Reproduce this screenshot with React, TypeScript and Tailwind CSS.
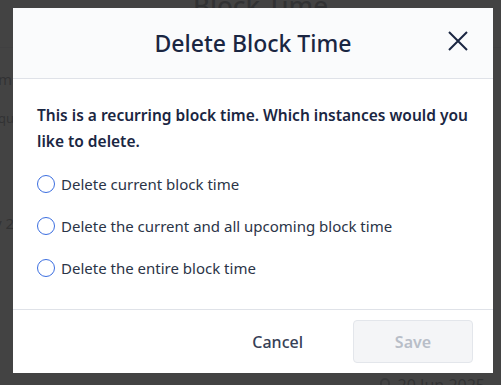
import { useState } from "react";

// 반복 블록 시간 삭제 모달 (정적 데모)

const FONT = { fontFamily: '"Noto Sans", "Open Sans", sans-serif' };

const options = [
  { key: "current", label: "Delete current block time" },
  { key: "upcoming", label: "Delete the current and all upcoming block time" },
  { key: "all", label: "Delete the entire block time" },
];

export default function App() {
  const [choice, setChoice] = useState<string | null>(null);

  return (
    <div className="relative h-[385px] w-[501px] overflow-hidden bg-white text-[#1f2937]" style={FONT}>
      {/* 뒤 페이지 */}
      <div className="flex h-full flex-col">
        <div className="flex h-[48px] items-start justify-center border-b border-gray-300">
          <h1 className="-mt-[14px] ml-[20px] text-[26px] font-medium">Block Time</h1>
        </div>
        <div className="pt-[20px] pl-0 text-[15px]">
          <p className="-ml-[2px]">m</p>
          <p className="mt-[18px] -ml-[2px] text-[13px]">qu</p>
          <p className="mt-[84px] -ml-[6px] text-[15px]">y 2</p>
        </div>
        <div className="mt-auto flex items-center justify-end gap-2 pr-[16px]">
          <span className="mb-[-14px] block h-[16px] w-[10px] rounded-full border-2 border-gray-500" />
          <span className="mb-[-12px] text-[16px]">20 Jun 2025</span>
        </div>
      </div>

      {/* 오버레이 */}
      <div className="absolute inset-0 bg-[#333333]/[0.92]">
        <div className="ml-[13px] mt-[8px] flex h-[365px] w-[480px] flex-col bg-white">
          {/* 헤더 */}
          <div className="relative flex h-[71px] shrink-0 items-center justify-center border-b border-[#dfe2e8] bg-[#fafbfc]">
            <h2 className="text-[23px] font-medium text-[#1a2642]">Delete Block Time</h2>
            <button className="absolute right-[25px] top-[23px] text-[#1a2642]" aria-label="close">
              <svg width="20" height="20" viewBox="0 0 20 20" fill="none" stroke="currentColor" strokeWidth="2">
                <path d="M1 1 L19 19 M19 1 L1 19" />
              </svg>
            </button>
          </div>

          {/* 본문 */}
          <div className="flex-1 px-[24px] pt-[23px]">
            <p className="text-[15.5px] font-semibold leading-[26px] text-[#1a2642]">
              This is a recurring block time. Which instances would you like to delete.
            </p>
            <div className="mt-[18px] flex flex-col gap-[18px]">
              {options.map((o) => (
                <label
                  key={o.key}
                  className="flex h-[24px] cursor-pointer items-center gap-[6px] text-[15px] text-[#2b3447]"
                  onClick={() => setChoice(o.key)}
                >
                  <span className="flex h-[18px] w-[18px] items-center justify-center rounded-full border-[1.5px] border-[#3b6ee0]">
                    {choice === o.key && <span className="h-[9px] w-[9px] rounded-full bg-[#3b6ee0]" />}
                  </span>
                  {o.label}
                </label>
              ))}
            </div>
          </div>

          {/* 푸터 */}
          <div className="flex h-[64px] shrink-0 items-center justify-end gap-[50px] border-t border-[#dfe2e8] pr-[20px]">
            <button className="text-[16px] font-medium text-[#364056]">Cancel</button>
            <button
              disabled={!choice}
              className={`h-[43px] w-[120px] rounded-[4px] border text-[16px] font-semibold ${
                choice
                  ? "border-[#3b6ee0] bg-[#3b6ee0] text-white"
                  : "border-[#e3e6eb] bg-[#f4f5f7] text-[#b8bec8]"
              }`}
            >
              Save
            </button>
          </div>
        </div>
      </div>
    </div>
  );
}
